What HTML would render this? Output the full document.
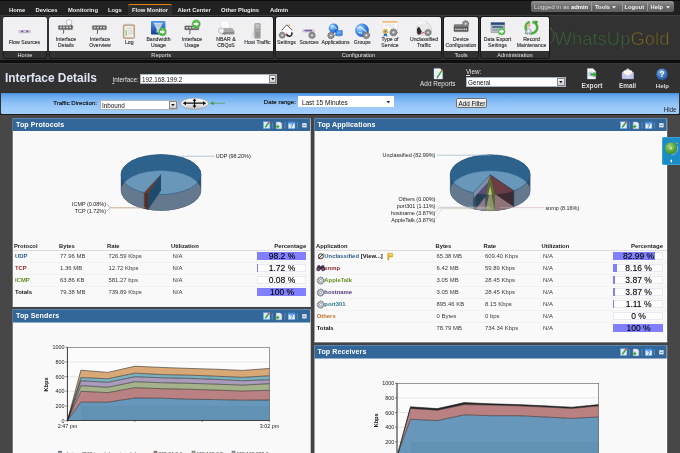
<!DOCTYPE html>
<html><head><meta charset="utf-8"><title>Interface Details</title>
<style>
html,body{margin:0;padding:0;}
body{width:680px;height:453px;overflow:hidden;background:#313131;position:relative;will-change:transform;font-family:"Liberation Sans",sans-serif;}
.t{position:absolute;white-space:nowrap;line-height:1.117em;}
.b{position:absolute;box-sizing:border-box;}
svg{position:absolute;overflow:visible;}
</style></head><body>
<div class="b" style="left:0px;top:0px;width:680px;height:15px;background:#212121;"></div>
<div class="b" style="left:0px;top:0px;width:680px;height:1px;background:#0c0c0c;"></div>
<div class="b" style="left:127.5px;top:4px;width:44.5px;height:11.5px;background:#2f2f2f;border-top:1px solid #e8820c;border-radius:2px 2px 0 0;"></div>
<span class="t" style="top:6.75px;font-size:5.8px;color:#ececec;font-weight:bold;left:9.00px;">Home</span>
<span class="t" style="top:6.75px;font-size:5.8px;color:#ececec;font-weight:bold;left:35.50px;">Devices</span>
<span class="t" style="top:6.75px;font-size:5.8px;color:#ececec;font-weight:bold;left:68.00px;">Monitoring</span>
<span class="t" style="top:6.75px;font-size:5.8px;color:#ececec;font-weight:bold;left:108.00px;">Logs</span>
<span class="t" style="top:6.75px;font-size:5.8px;color:#ececec;font-weight:bold;left:132.00px;">Flow Monitor</span>
<span class="t" style="top:6.75px;font-size:5.8px;color:#ececec;font-weight:bold;left:177.50px;">Alert Center</span>
<span class="t" style="top:6.75px;font-size:5.8px;color:#ececec;font-weight:bold;left:221.00px;">Other Plugins</span>
<span class="t" style="top:6.75px;font-size:5.8px;color:#ececec;font-weight:bold;left:270.00px;">Admin</span>
<div class="b" style="left:530.5px;top:1.3px;width:143.5px;height:11px;background:linear-gradient(#929292,#6c6c6c 50%,#5e5e5e);border-radius:2.5px;"></div>
<span class="t" style="top:3.69px;font-size:6.2px;color:#dcdcdc;left:534.00px;">Logged in as</span>
<span class="t" style="top:4.05px;font-size:5.8px;color:#fff;font-weight:bold;left:571.00px;">admin</span>
<div class="b" style="left:591px;top:2.2px;width:0.6px;height:9.2px;background:#9a9a9a;"></div>
<div class="b" style="left:621.5px;top:2.2px;width:0.6px;height:9.2px;background:#9a9a9a;"></div>
<div class="b" style="left:647px;top:2.2px;width:0.6px;height:9.2px;background:#9a9a9a;"></div>
<span class="t" style="top:4.05px;font-size:5.8px;color:#f2f2f2;font-weight:bold;left:595.00px;">Tools</span>
<span class="t" style="top:4.05px;font-size:5.8px;color:#f2f2f2;font-weight:bold;left:624.50px;">Logout</span>
<span class="t" style="top:4.05px;font-size:5.8px;color:#f2f2f2;font-weight:bold;left:650.50px;">Help</span>
<svg style="left:0;top:0" width="680" height="15"><path d="M612 6.3h4l-2 2.2zM666 6.3h4l-2 2.2z" fill="#f2f2f2"/></svg>
<div class="b" style="left:0px;top:15px;width:680px;height:45.4px;background:#323232;"></div>
<div class="b" style="left:1px;top:14.8px;width:679px;height:0.9px;background:#3d3d3d;"></div>
<div class="b" style="left:0px;top:60.3px;width:680px;height:2.6px;background:#0e0e0e;"></div>
<div class="b" style="left:0px;top:63px;width:680px;height:1.4px;background:#383838;"></div>
<div class="b" style="left:2.7px;top:16.4px;width:44.6px;height:43.1px;background:#313131;border:1px solid #191919;border-radius:2.5px;"></div>
<div class="b" style="left:3.3px;top:17.3px;width:43.4px;height:33.5px;background:#f0f0f2;border-radius:2px 2px 0 0;"></div>
<span class="t" style="top:52.23px;font-size:5.6px;color:#e6e6e6;left:25.00px;transform:translateX(-50%);">Home</span>
<div class="b" style="left:48.7px;top:16.4px;width:224.9px;height:43.1px;background:#313131;border:1px solid #191919;border-radius:2.5px;"></div>
<div class="b" style="left:49.3px;top:17.3px;width:223.70000000000002px;height:33.5px;background:#f0f0f2;border-radius:2px 2px 0 0;"></div>
<span class="t" style="top:52.23px;font-size:5.6px;color:#e6e6e6;left:161.15px;transform:translateX(-50%);">Reports</span>
<div class="b" style="left:275.3px;top:16.4px;width:166.29999999999998px;height:43.1px;background:#313131;border:1px solid #191919;border-radius:2.5px;"></div>
<div class="b" style="left:275.90000000000003px;top:17.3px;width:165.1px;height:33.5px;background:#f0f0f2;border-radius:2px 2px 0 0;"></div>
<span class="t" style="top:52.23px;font-size:5.6px;color:#e6e6e6;left:358.45px;transform:translateX(-50%);">Configuration</span>
<div class="b" style="left:443.4px;top:16.4px;width:35.200000000000024px;height:43.1px;background:#313131;border:1px solid #191919;border-radius:2.5px;"></div>
<div class="b" style="left:444.0px;top:17.3px;width:34.00000000000002px;height:33.5px;background:#f0f0f2;border-radius:2px 2px 0 0;"></div>
<span class="t" style="top:52.23px;font-size:5.6px;color:#e6e6e6;left:461.00px;transform:translateX(-50%);">Tools</span>
<div class="b" style="left:480.4px;top:16.4px;width:69.19999999999996px;height:43.1px;background:#313131;border:1px solid #191919;border-radius:2.5px;"></div>
<div class="b" style="left:481.0px;top:17.3px;width:67.99999999999997px;height:33.5px;background:#f0f0f2;border-radius:2px 2px 0 0;"></div>
<span class="t" style="top:52.23px;font-size:5.6px;color:#e6e6e6;left:515.00px;transform:translateX(-50%);">Administration</span>
<span class="t" style="top:40.28px;font-size:5.1px;color:#383838;left:24.50px;transform:translateX(-50%);-webkit-text-stroke:0.16px #383838;letter-spacing:0.05px;">Flow Sources</span>
<span class="t" style="top:37.38px;font-size:5.1px;color:#383838;left:66.00px;transform:translateX(-50%);-webkit-text-stroke:0.16px #383838;letter-spacing:0.05px;">Interface</span>
<span class="t" style="top:43.18px;font-size:5.1px;color:#383838;left:66.00px;transform:translateX(-50%);-webkit-text-stroke:0.16px #383838;letter-spacing:0.05px;">Details</span>
<span class="t" style="top:37.38px;font-size:5.1px;color:#383838;left:100.00px;transform:translateX(-50%);-webkit-text-stroke:0.16px #383838;letter-spacing:0.05px;">Interface</span>
<span class="t" style="top:43.18px;font-size:5.1px;color:#383838;left:100.00px;transform:translateX(-50%);-webkit-text-stroke:0.16px #383838;letter-spacing:0.05px;">Overview</span>
<span class="t" style="top:40.28px;font-size:5.1px;color:#383838;left:129.30px;transform:translateX(-50%);-webkit-text-stroke:0.16px #383838;letter-spacing:0.05px;">Log</span>
<span class="t" style="top:37.38px;font-size:5.1px;color:#383838;left:158.50px;transform:translateX(-50%);-webkit-text-stroke:0.16px #383838;letter-spacing:0.05px;">Bandwidth</span>
<span class="t" style="top:43.18px;font-size:5.1px;color:#383838;left:158.50px;transform:translateX(-50%);-webkit-text-stroke:0.16px #383838;letter-spacing:0.05px;">Usage</span>
<span class="t" style="top:37.38px;font-size:5.1px;color:#383838;left:192.00px;transform:translateX(-50%);-webkit-text-stroke:0.16px #383838;letter-spacing:0.05px;">Interface</span>
<span class="t" style="top:43.18px;font-size:5.1px;color:#383838;left:192.00px;transform:translateX(-50%);-webkit-text-stroke:0.16px #383838;letter-spacing:0.05px;">Usage</span>
<span class="t" style="top:37.38px;font-size:5.1px;color:#383838;left:226.00px;transform:translateX(-50%);-webkit-text-stroke:0.16px #383838;letter-spacing:0.05px;">NBAR &amp;</span>
<span class="t" style="top:43.18px;font-size:5.1px;color:#383838;left:226.00px;transform:translateX(-50%);-webkit-text-stroke:0.16px #383838;letter-spacing:0.05px;">CBQoS</span>
<span class="t" style="top:40.28px;font-size:5.1px;color:#383838;left:257.50px;transform:translateX(-50%);-webkit-text-stroke:0.16px #383838;letter-spacing:0.05px;">Host Traffic</span>
<span class="t" style="top:40.28px;font-size:5.1px;color:#383838;left:286.50px;transform:translateX(-50%);-webkit-text-stroke:0.16px #383838;letter-spacing:0.05px;">Settings</span>
<span class="t" style="top:40.28px;font-size:5.1px;color:#383838;left:309.00px;transform:translateX(-50%);-webkit-text-stroke:0.16px #383838;letter-spacing:0.05px;">Sources</span>
<span class="t" style="top:40.28px;font-size:5.1px;color:#383838;left:335.50px;transform:translateX(-50%);-webkit-text-stroke:0.16px #383838;letter-spacing:0.05px;">Applications</span>
<span class="t" style="top:40.28px;font-size:5.1px;color:#383838;left:362.20px;transform:translateX(-50%);-webkit-text-stroke:0.16px #383838;letter-spacing:0.05px;">Groups</span>
<span class="t" style="top:37.38px;font-size:5.1px;color:#383838;left:390.00px;transform:translateX(-50%);-webkit-text-stroke:0.16px #383838;letter-spacing:0.05px;">Type of</span>
<span class="t" style="top:43.18px;font-size:5.1px;color:#383838;left:390.00px;transform:translateX(-50%);-webkit-text-stroke:0.16px #383838;letter-spacing:0.05px;">Service</span>
<span class="t" style="top:37.38px;font-size:5.1px;color:#383838;left:424.00px;transform:translateX(-50%);-webkit-text-stroke:0.16px #383838;letter-spacing:0.05px;">Unclassified</span>
<span class="t" style="top:43.18px;font-size:5.1px;color:#383838;left:424.00px;transform:translateX(-50%);-webkit-text-stroke:0.16px #383838;letter-spacing:0.05px;">Traffic</span>
<span class="t" style="top:37.38px;font-size:5.1px;color:#383838;left:461.00px;transform:translateX(-50%);-webkit-text-stroke:0.16px #383838;letter-spacing:0.05px;">Device</span>
<span class="t" style="top:43.18px;font-size:5.1px;color:#383838;left:461.00px;transform:translateX(-50%);-webkit-text-stroke:0.16px #383838;letter-spacing:0.05px;">Configuration</span>
<span class="t" style="top:37.38px;font-size:5.1px;color:#383838;left:497.50px;transform:translateX(-50%);-webkit-text-stroke:0.16px #383838;letter-spacing:0.05px;">Data Export</span>
<span class="t" style="top:43.18px;font-size:5.1px;color:#383838;left:497.50px;transform:translateX(-50%);-webkit-text-stroke:0.16px #383838;letter-spacing:0.05px;">Settings</span>
<span class="t" style="top:37.38px;font-size:5.1px;color:#383838;left:531.50px;transform:translateX(-50%);-webkit-text-stroke:0.16px #383838;letter-spacing:0.05px;">Record</span>
<span class="t" style="top:43.18px;font-size:5.1px;color:#383838;left:531.50px;transform:translateX(-50%);-webkit-text-stroke:0.16px #383838;letter-spacing:0.05px;">Maintenance</span>
<span class="t" style="top:28.65px;font-size:18.4px;color:#3a693a;left:554.50px;letter-spacing:0.05px;-webkit-text-stroke:0.55px #323232;"><span style="color:#386538">WhatsUp</span><span style="color:#7a681e">Gold</span></span>
<svg style="left:0;top:0" width="680" height="62"><path d="M550 28.5a9 9 0 0 1 0 15" fill="none" stroke="#555" stroke-width="0.8"/><path d="M550 27l1 2.5" stroke="#7c691f" stroke-width="0.8"/></svg>
<span class="t" style="top:71.63px;font-size:11.9px;color:#dfe6f2;font-weight:bold;left:5.00px;">Interface Details</span>
<span class="t" style="top:76.30px;font-size:6.3px;color:#e0e0e0;left:112.50px;"><u>I</u>nterface:</span>
<div class="b" style="left:140px;top:74.3px;width:137px;height:9.8px;background:#fff;border:0.5px solid #a9b4c0;"></div>
<span class="t" style="top:76.00px;font-size:6.3px;color:#111;left:142.00px;">192.168.199.2</span>
<div class="b" style="left:268.6px;top:75.1px;width:7.6px;height:8.200000000000001px;background:linear-gradient(#f4f4f4,#cfcfcf);border:0.5px solid #888;"></div>
<svg style="left:268.6px;top:74.3px" width="8" height="9.8"><path d="M2.2 4.0h3.4l-1.7 2.2z" fill="#111"/></svg>
<span class="t" style="top:80.22px;font-size:6.39px;color:#e0e0e0;left:437.80px;transform:translateX(-50%);">Add Reports</span>
<span class="t" style="top:68.20px;font-size:6.3px;color:#e0e0e0;left:466.00px;"><u>V</u>iew:</span>
<div class="b" style="left:466px;top:77px;width:99.5px;height:9.8px;background:#fff;border:0.5px solid #a9b4c0;"></div>
<span class="t" style="top:78.70px;font-size:6.3px;color:#111;left:468.00px;">General</span>
<div class="b" style="left:557.1px;top:77.8px;width:7.6px;height:8.200000000000001px;background:linear-gradient(#f4f4f4,#cfcfcf);border:0.5px solid #888;"></div>
<svg style="left:557.1px;top:77px" width="8" height="9.8"><path d="M2.2 4.0h3.4l-1.7 2.2z" fill="#111"/></svg>
<span class="t" style="top:82.03px;font-size:6.6px;color:#dcdcdc;font-weight:bold;left:592.00px;transform:translateX(-50%);">Export</span>
<span class="t" style="top:82.25px;font-size:6.35px;color:#dcdcdc;font-weight:bold;left:627.50px;transform:translateX(-50%);">Email</span>
<span class="t" style="top:82.62px;font-size:6.05px;color:#dcdcdc;font-weight:bold;left:662.40px;transform:translateX(-50%);">Help</span>
<div class="b" style="left:1px;top:92.8px;width:677.7px;height:21px;background:linear-gradient(#4585d2 0%,#5c9de9 7%,#70b0f1 22%,#8ec1f6 48%,#9ccafa 72%,#a0cdfc 100%);border-radius:0 0 1.5px 1.5px;"></div>
<span class="t" style="top:99.92px;font-size:6.05px;color:#0c0c0c;left:53.20px;-webkit-text-stroke:0.15px #111;">Traffic Direction:</span>
<div class="b" style="left:100px;top:99.8px;width:77.5px;height:9.8px;background:#fff;border:0.5px solid #a9b4c0;"></div>
<span class="t" style="top:101.50px;font-size:6.3px;color:#111;left:102.00px;">Inbound</span>
<div class="b" style="left:169.1px;top:100.6px;width:7.6px;height:8.200000000000001px;background:linear-gradient(#f4f4f4,#cfcfcf);border:0.5px solid #888;"></div>
<svg style="left:169.1px;top:99.8px" width="8" height="9.8"><path d="M2.2 4.0h3.4l-1.7 2.2z" fill="#111"/></svg>
<span class="t" style="top:99.03px;font-size:6.15px;color:#0c0c0c;left:263.80px;-webkit-text-stroke:0.15px #111;">Date range:</span>
<div class="b" style="left:298px;top:96.4px;width:95.5px;height:10.3px;background:#fff;"></div>
<span class="t" style="top:99.02px;font-size:6.5px;color:#111;left:301.90px;">Last 15 Minutes</span>
<svg style="left:386px;top:96.5px" width="8" height="10"><path d="M0.5 4h3.6l-1.8 2.2z" fill="#10104a"/></svg>
<div class="b" style="left:456.2px;top:98.3px;width:31.2px;height:10.2px;background:linear-gradient(#f6f6f6,#dcdcdc);border:0.6px solid #6f6f6f;border-radius:1.5px;"></div>
<span class="t" style="top:100.20px;font-size:6.3px;color:#111;left:472.00px;transform:translateX(-50%);">Add Filter</span>
<span class="t" style="top:105.90px;font-size:6.3px;color:#222;right:3.40px;">Hide</span>
<svg style="left:0;top:0" width="680" height="120">
<defs><linearGradient id="eg" x1="0" y1="0" x2="0" y2="1"><stop offset="0" stop-color="#ffffff"/><stop offset="0.6" stop-color="#e6e6e6"/><stop offset="1" stop-color="#bcbcbc"/></linearGradient></defs>
<ellipse cx="194.5" cy="103.7" rx="14" ry="5.6" fill="url(#eg)" stroke="#8a8a8a" stroke-width="0.5"/>
<path d="M184.5 103.2h20M194.5 99.6v7.2" stroke="#111" stroke-width="1.2" fill="none"/>
<path d="M182.8 103.2l3.2-2v4zM206.2 103.2l-3.200-2v4zM194.5 98.500l-2 2.300h4zM194.5 107.900l-2-2.300h4z" fill="#111"/>
<path d="M211.5 103.2h13.5" stroke="#4a9a3a" stroke-width="0.7"/><path d="M209.8 103.2l3.6-1.7v3.4z" fill="#3f9a34"/>
</svg>
<div class="b" style="left:0px;top:114px;width:680px;height:339px;background:#474747;"></div>
<div class="b" style="left:0px;top:113.8px;width:680px;height:1.4px;background:#1a1a1a;"></div>
<div class="b" style="left:11.7px;top:117.6px;width:657px;height:340px;background:#434343;"></div>
<svg style="left:0;top:0" width="680" height="453"><rect x="12.7" y="118.5" width="298.0" height="188.2" fill="#f9f9f9"/><rect x="12.7" y="305.5" width="298.0" height="1.2" fill="#ffffff"/><rect x="12.7" y="118.5" width="297.5" height="12.5" fill="#336699"/><rect x="12.7" y="118.5" width="297.5" height="0.6" fill="#5a88b8"/></svg>
<span class="t" style="top:120.92px;font-size:7.05px;color:#fff;font-weight:bold;left:16.00px;letter-spacing:0.1px;">Top Protocols</span>
<svg style="left:261.2px;top:118.60px" width="50" height="13">
<g>
<rect x="2.4" y="2.7" width="6.5" height="6.8" fill="#dce9fb" stroke="#62a4f2" stroke-width="0.5"/>
<path d="M4.300 8.400l3.100-4.400" stroke="#3aa02a" stroke-width="1.500"/><path d="M7.400 4l0.900-1.300" stroke="#e03a20" stroke-width="1.500"/>
<path d="M11.3 3v6.6M24 3v6.6M36.3 3v6.6" stroke="#8fb0d0" stroke-width="0.5"/>
<path d="M15.2 2.9h4l1.6 1.600v5.200h-5.600z" fill="#e2e9f1" stroke="#b8c8d8" stroke-width="0.3"/>
<path d="M14.300 6.900h2v-1.300l2.300 2-2.300 2v-1.300h-2z" fill="#2aa52a"/>
<rect x="27.2" y="3" width="6.8" height="6.6" fill="#dfeeff" stroke="#5aa0e8" stroke-width="0.5"/>
<rect x="27.2" y="3" width="6.8" height="1.6" fill="#3b8ae6"/>
<text x="30.6" y="8.9" font-size="4.6" font-weight="bold" fill="#2a6ac0" text-anchor="middle" font-family="Liberation Sans">?</text>
<rect x="41.2" y="4.2" width="4.4" height="4.2" fill="#e4e9f0"/>
<path d="M42.1 6.4h2.6" stroke="#4a6a98" stroke-width="0.7"/>
</g></svg>
<svg style="left:0;top:0" width="680" height="453"><rect x="12.7" y="309.4" width="298.0" height="150.60000000000002" fill="#f9f9f9"/><rect x="12.7" y="458.8" width="298.0" height="1.2" fill="#ffffff"/><rect x="12.7" y="309.4" width="297.5" height="13.1" fill="#336699"/><rect x="12.7" y="309.4" width="297.5" height="0.6" fill="#5a88b8"/></svg>
<span class="t" style="top:312.12px;font-size:7.05px;color:#fff;font-weight:bold;left:16.00px;letter-spacing:0.1px;">Top Senders</span>
<svg style="left:261.2px;top:309.80px" width="50" height="13">
<g>
<rect x="2.4" y="2.7" width="6.5" height="6.8" fill="#dce9fb" stroke="#62a4f2" stroke-width="0.5"/>
<path d="M4.300 8.400l3.100-4.400" stroke="#3aa02a" stroke-width="1.500"/><path d="M7.400 4l0.900-1.300" stroke="#e03a20" stroke-width="1.500"/>
<path d="M11.3 3v6.6M24 3v6.6M36.3 3v6.6" stroke="#8fb0d0" stroke-width="0.5"/>
<path d="M15.2 2.9h4l1.6 1.600v5.200h-5.600z" fill="#e2e9f1" stroke="#b8c8d8" stroke-width="0.3"/>
<path d="M14.300 6.900h2v-1.300l2.300 2-2.300 2v-1.300h-2z" fill="#2aa52a"/>
<rect x="27.2" y="3" width="6.8" height="6.6" fill="#dfeeff" stroke="#5aa0e8" stroke-width="0.5"/>
<rect x="27.2" y="3" width="6.8" height="1.6" fill="#3b8ae6"/>
<text x="30.6" y="8.9" font-size="4.6" font-weight="bold" fill="#2a6ac0" text-anchor="middle" font-family="Liberation Sans">?</text>
<rect x="41.2" y="4.2" width="4.4" height="4.2" fill="#e4e9f0"/>
<path d="M42.1 6.4h2.6" stroke="#4a6a98" stroke-width="0.7"/>
</g></svg>
<svg style="left:0;top:0" width="680" height="453"><rect x="314.5" y="118.5" width="352.70000000000005" height="223.7" fill="#f9f9f9"/><rect x="314.5" y="341.0" width="352.70000000000005" height="1.2" fill="#ffffff"/><rect x="314.5" y="118.5" width="352.20000000000005" height="12.5" fill="#336699"/><rect x="314.5" y="118.5" width="352.20000000000005" height="0.6" fill="#5a88b8"/></svg>
<span class="t" style="top:120.92px;font-size:7.05px;color:#fff;font-weight:bold;left:317.50px;letter-spacing:0.1px;">Top Applications</span>
<svg style="left:617.7px;top:118.60px" width="50" height="13">
<g>
<rect x="2.4" y="2.7" width="6.5" height="6.8" fill="#dce9fb" stroke="#62a4f2" stroke-width="0.5"/>
<path d="M4.300 8.400l3.100-4.400" stroke="#3aa02a" stroke-width="1.500"/><path d="M7.400 4l0.900-1.300" stroke="#e03a20" stroke-width="1.500"/>
<path d="M11.3 3v6.6M24 3v6.6M36.3 3v6.6" stroke="#8fb0d0" stroke-width="0.5"/>
<path d="M15.2 2.9h4l1.6 1.600v5.200h-5.600z" fill="#e2e9f1" stroke="#b8c8d8" stroke-width="0.3"/>
<path d="M14.300 6.900h2v-1.300l2.300 2-2.300 2v-1.300h-2z" fill="#2aa52a"/>
<rect x="27.2" y="3" width="6.8" height="6.6" fill="#dfeeff" stroke="#5aa0e8" stroke-width="0.5"/>
<rect x="27.2" y="3" width="6.8" height="1.6" fill="#3b8ae6"/>
<text x="30.6" y="8.9" font-size="4.6" font-weight="bold" fill="#2a6ac0" text-anchor="middle" font-family="Liberation Sans">?</text>
<rect x="41.2" y="4.2" width="4.4" height="4.2" fill="#e4e9f0"/>
<path d="M42.1 6.4h2.6" stroke="#4a6a98" stroke-width="0.7"/>
</g></svg>
<svg style="left:0;top:0" width="680" height="453"><rect x="314.5" y="345.3" width="352.70000000000005" height="114.69999999999999" fill="#f9f9f9"/><rect x="314.5" y="458.8" width="352.70000000000005" height="1.2" fill="#ffffff"/><rect x="314.5" y="345.3" width="352.20000000000005" height="13.2" fill="#336699"/><rect x="314.5" y="345.3" width="352.20000000000005" height="0.6" fill="#5a88b8"/></svg>
<span class="t" style="top:348.07px;font-size:7.05px;color:#fff;font-weight:bold;left:317.50px;letter-spacing:0.1px;">Top Receivers</span>
<svg style="left:617.7px;top:345.75px" width="50" height="13">
<g>
<rect x="2.4" y="2.7" width="6.5" height="6.8" fill="#dce9fb" stroke="#62a4f2" stroke-width="0.5"/>
<path d="M4.300 8.400l3.100-4.400" stroke="#3aa02a" stroke-width="1.500"/><path d="M7.400 4l0.900-1.300" stroke="#e03a20" stroke-width="1.500"/>
<path d="M11.3 3v6.6M24 3v6.6M36.3 3v6.6" stroke="#8fb0d0" stroke-width="0.5"/>
<path d="M15.2 2.9h4l1.6 1.600v5.200h-5.600z" fill="#e2e9f1" stroke="#b8c8d8" stroke-width="0.3"/>
<path d="M14.300 6.900h2v-1.300l2.300 2-2.300 2v-1.300h-2z" fill="#2aa52a"/>
<rect x="27.2" y="3" width="6.8" height="6.6" fill="#dfeeff" stroke="#5aa0e8" stroke-width="0.5"/>
<rect x="27.2" y="3" width="6.8" height="1.6" fill="#3b8ae6"/>
<text x="30.6" y="8.9" font-size="4.6" font-weight="bold" fill="#2a6ac0" text-anchor="middle" font-family="Liberation Sans">?</text>
<rect x="41.2" y="4.2" width="4.4" height="4.2" fill="#e4e9f0"/>
<path d="M42.1 6.4h2.6" stroke="#4a6a98" stroke-width="0.7"/>
</g></svg>
<div class="b" style="left:662px;top:136.8px;width:18px;height:28px;background:#1b8cc4;border-radius:2px 0 0 2px;border:0.5px solid #3aa3d6;border-right:none;"></div>
<svg style="left:0;top:0" width="680" height="200">
<defs><radialGradient id="gg" cx="0.4" cy="0.35" r="0.7"><stop offset="0" stop-color="#a8d878"/><stop offset="0.6" stop-color="#5aa838"/><stop offset="1" stop-color="#3a8828"/></radialGradient></defs>
<circle cx="671" cy="148.3" r="6" fill="url(#gg)"/>
<circle cx="671" cy="148.3" r="1.3" fill="#d8e8c8" opacity="0.8"/>
<path d="M677.5 146a7 7 0 0 1-6 9" fill="none" stroke="#cfe8f5" stroke-width="0.5"/>
<circle cx="677" cy="143.3" r="0.9" fill="#f0a030"/>
<path d="M672 159.3v3.4l-2-1.7z" fill="#fff"/>
</svg>
<span class="t" style="top:243.05px;font-size:5.8px;color:#222;font-weight:bold;left:14.00px;">Protocol</span>
<span class="t" style="top:243.05px;font-size:5.8px;color:#222;font-weight:bold;left:59.00px;">Bytes</span>
<span class="t" style="top:243.05px;font-size:5.8px;color:#222;font-weight:bold;left:107.00px;">Rate</span>
<span class="t" style="top:243.05px;font-size:5.8px;color:#222;font-weight:bold;left:171.00px;">Utilization</span>
<span class="t" style="top:242.92px;font-size:5.95px;color:#222;font-weight:bold;right:373.80px;">Percentage</span>
<div class="b" style="left:13.2px;top:249.8px;width:297.2px;height:0.6px;background:#dcdcdc;"></div>
<span class="t" style="top:253.16px;font-size:5.9px;color:#2c5d8f;font-weight:bold;left:15.00px;">UDP</span>
<span class="t" style="top:253.42px;font-size:5.95px;color:#3a3a3a;left:60.00px;">77.96 MB</span>
<span class="t" style="top:253.42px;font-size:5.95px;color:#3a3a3a;left:108.50px;">726.59 Kbps</span>
<span class="t" style="top:253.42px;font-size:5.95px;color:#3a3a3a;left:172.50px;">N/A</span>
<div class="b" style="left:257px;top:251.8px;width:49.4px;height:8px;background:#fdfdfd;border:0.5px solid #e8e8f0;"></div>
<div class="b" style="left:257px;top:251.8px;width:48.510799999999996px;height:8px;background:#8080ff;"></div>
<span class="t" style="top:251.81px;font-size:8.5px;color:#000;left:282.00px;transform:translateX(-50%);-webkit-text-stroke:0.12px #000;">98.2 %</span>
<div class="b" style="left:13.2px;top:261.8px;width:297.2px;height:0.5px;background:#f2f2f2;"></div>
<span class="t" style="top:265.16px;font-size:5.9px;color:#8b2a2a;font-weight:bold;left:15.00px;">TCP</span>
<span class="t" style="top:265.42px;font-size:5.95px;color:#3a3a3a;left:60.00px;">1.36 MB</span>
<span class="t" style="top:265.42px;font-size:5.95px;color:#3a3a3a;left:108.50px;">12.72 Kbps</span>
<span class="t" style="top:265.42px;font-size:5.95px;color:#3a3a3a;left:172.50px;">N/A</span>
<div class="b" style="left:257px;top:263.8px;width:49.4px;height:8px;background:#fdfdfd;border:0.5px solid #e8e8f0;"></div>
<div class="b" style="left:257px;top:263.8px;width:0.8496799999999999px;height:8px;background:#8080ff;"></div>
<span class="t" style="top:263.81px;font-size:8.5px;color:#000;left:282.00px;transform:translateX(-50%);-webkit-text-stroke:0.12px #000;">1.72 %</span>
<div class="b" style="left:13.2px;top:273.8px;width:297.2px;height:0.5px;background:#f2f2f2;"></div>
<span class="t" style="top:277.16px;font-size:5.9px;color:#6b8e23;font-weight:bold;left:15.00px;">ICMP</span>
<span class="t" style="top:277.42px;font-size:5.95px;color:#3a3a3a;left:60.00px;">63.86 KB</span>
<span class="t" style="top:277.42px;font-size:5.95px;color:#3a3a3a;left:108.50px;">581.27 bps</span>
<span class="t" style="top:277.42px;font-size:5.95px;color:#3a3a3a;left:172.50px;">N/A</span>
<div class="b" style="left:257px;top:275.8px;width:49.4px;height:8px;background:#fdfdfd;border:0.5px solid #e8e8f0;"></div>
<div class="b" style="left:257px;top:275.8px;width:0.03952px;height:8px;background:#8080ff;"></div>
<span class="t" style="top:275.81px;font-size:8.5px;color:#000;left:282.00px;transform:translateX(-50%);-webkit-text-stroke:0.12px #000;">0.08 %</span>
<div class="b" style="left:13.2px;top:285.8px;width:297.2px;height:0.5px;background:#f2f2f2;"></div>
<span class="t" style="top:289.16px;font-size:5.9px;color:#111;font-weight:bold;left:15.00px;">Totals</span>
<span class="t" style="top:289.42px;font-size:5.95px;color:#3a3a3a;left:60.00px;">79.38 MB</span>
<span class="t" style="top:289.42px;font-size:5.95px;color:#3a3a3a;left:108.50px;">739.89 Kbps</span>
<span class="t" style="top:289.42px;font-size:5.95px;color:#3a3a3a;left:172.50px;">N/A</span>
<div class="b" style="left:257px;top:287.8px;width:49.4px;height:8px;background:#fdfdfd;border:0.5px solid #e8e8f0;"></div>
<div class="b" style="left:257px;top:287.8px;width:49.4px;height:8px;background:#8080ff;"></div>
<span class="t" style="top:287.81px;font-size:8.5px;color:#000;left:282.00px;transform:translateX(-50%);-webkit-text-stroke:0.12px #000;">100 %</span>
<span class="t" style="top:243.05px;font-size:5.8px;color:#222;font-weight:bold;left:316.00px;">Application</span>
<span class="t" style="top:243.05px;font-size:5.8px;color:#222;font-weight:bold;left:435.50px;">Bytes</span>
<span class="t" style="top:243.05px;font-size:5.8px;color:#222;font-weight:bold;left:483.50px;">Rate</span>
<span class="t" style="top:243.05px;font-size:5.8px;color:#222;font-weight:bold;left:541.50px;">Utilization</span>
<span class="t" style="top:242.92px;font-size:5.95px;color:#222;font-weight:bold;right:17.00px;">Percentage</span>
<div class="b" style="left:314.8px;top:249.8px;width:352.2px;height:0.6px;background:#dcdcdc;"></div>
<span class="t" style="top:252.96px;font-size:5.9px;color:#2c5d8f;font-weight:bold;left:324.30px;">Unclassified</span>
<span class="t" style="top:253.32px;font-size:5.95px;color:#3a3a3a;left:436.50px;">65.38 MB</span>
<span class="t" style="top:253.32px;font-size:5.95px;color:#3a3a3a;left:485.00px;">609.40 Kbps</span>
<span class="t" style="top:253.32px;font-size:5.95px;color:#3a3a3a;left:543.00px;">N/A</span>
<div class="b" style="left:613.4px;top:251.8px;width:49.8px;height:8px;background:#fdfdfd;border:0.5px solid #e8e8f0;"></div>
<div class="b" style="left:613.4px;top:251.8px;width:41.32901999999999px;height:8px;background:#8080ff;"></div>
<span class="t" style="top:251.81px;font-size:8.5px;color:#000;left:638.60px;transform:translateX(-50%);-webkit-text-stroke:0.12px #000;">82.99 %</span>
<div class="b" style="left:314.8px;top:261.8px;width:352.2px;height:0.5px;background:#f2f2f2;"></div>
<span class="t" style="top:264.96px;font-size:5.9px;color:#8b2a2a;font-weight:bold;left:324.30px;">snmp</span>
<span class="t" style="top:265.32px;font-size:5.95px;color:#3a3a3a;left:436.50px;">6.42 MB</span>
<span class="t" style="top:265.32px;font-size:5.95px;color:#3a3a3a;left:485.00px;">59.89 Kbps</span>
<span class="t" style="top:265.32px;font-size:5.95px;color:#3a3a3a;left:543.00px;">N/A</span>
<div class="b" style="left:613.4px;top:263.8px;width:49.8px;height:8px;background:#fdfdfd;border:0.5px solid #e8e8f0;"></div>
<div class="b" style="left:613.4px;top:263.8px;width:4.06368px;height:8px;background:#8080ff;"></div>
<span class="t" style="top:263.81px;font-size:8.5px;color:#000;left:638.60px;transform:translateX(-50%);-webkit-text-stroke:0.12px #000;">8.16 %</span>
<div class="b" style="left:314.8px;top:273.8px;width:352.2px;height:0.5px;background:#f2f2f2;"></div>
<span class="t" style="top:276.96px;font-size:5.9px;color:#6b8e23;font-weight:bold;left:324.30px;">AppleTalk</span>
<span class="t" style="top:277.32px;font-size:5.95px;color:#3a3a3a;left:436.50px;">3.05 MB</span>
<span class="t" style="top:277.32px;font-size:5.95px;color:#3a3a3a;left:485.00px;">28.45 Kbps</span>
<span class="t" style="top:277.32px;font-size:5.95px;color:#3a3a3a;left:543.00px;">N/A</span>
<div class="b" style="left:613.4px;top:275.8px;width:49.8px;height:8px;background:#fdfdfd;border:0.5px solid #e8e8f0;"></div>
<div class="b" style="left:613.4px;top:275.8px;width:1.92726px;height:8px;background:#8080ff;"></div>
<span class="t" style="top:275.81px;font-size:8.5px;color:#000;left:638.60px;transform:translateX(-50%);-webkit-text-stroke:0.12px #000;">3.87 %</span>
<div class="b" style="left:314.8px;top:285.8px;width:352.2px;height:0.5px;background:#f2f2f2;"></div>
<span class="t" style="top:288.96px;font-size:5.9px;color:#4b3a7a;font-weight:bold;left:324.30px;">hostname</span>
<span class="t" style="top:289.32px;font-size:5.95px;color:#3a3a3a;left:436.50px;">3.05 MB</span>
<span class="t" style="top:289.32px;font-size:5.95px;color:#3a3a3a;left:485.00px;">28.45 Kbps</span>
<span class="t" style="top:289.32px;font-size:5.95px;color:#3a3a3a;left:543.00px;">N/A</span>
<div class="b" style="left:613.4px;top:287.8px;width:49.8px;height:8px;background:#fdfdfd;border:0.5px solid #e8e8f0;"></div>
<div class="b" style="left:613.4px;top:287.8px;width:1.92726px;height:8px;background:#8080ff;"></div>
<span class="t" style="top:287.81px;font-size:8.5px;color:#000;left:638.60px;transform:translateX(-50%);-webkit-text-stroke:0.12px #000;">3.87 %</span>
<div class="b" style="left:314.8px;top:297.8px;width:352.2px;height:0.5px;background:#f2f2f2;"></div>
<span class="t" style="top:300.96px;font-size:5.9px;color:#2a7a8f;font-weight:bold;left:324.30px;">port301</span>
<span class="t" style="top:301.32px;font-size:5.95px;color:#3a3a3a;left:436.50px;">895.46 KB</span>
<span class="t" style="top:301.32px;font-size:5.95px;color:#3a3a3a;left:485.00px;">8.15 Kbps</span>
<span class="t" style="top:301.32px;font-size:5.95px;color:#3a3a3a;left:543.00px;">N/A</span>
<div class="b" style="left:613.4px;top:299.8px;width:49.8px;height:8px;background:#fdfdfd;border:0.5px solid #e8e8f0;"></div>
<div class="b" style="left:613.4px;top:299.8px;width:0.5527799999999999px;height:8px;background:#8080ff;"></div>
<span class="t" style="top:299.81px;font-size:8.5px;color:#000;left:638.60px;transform:translateX(-50%);-webkit-text-stroke:0.12px #000;">1.11 %</span>
<div class="b" style="left:314.8px;top:309.8px;width:352.2px;height:0.5px;background:#f2f2f2;"></div>
<span class="t" style="top:312.96px;font-size:5.9px;color:#b8732a;font-weight:bold;left:316.70px;">Others</span>
<span class="t" style="top:313.32px;font-size:5.95px;color:#3a3a3a;left:436.50px;">0 Bytes</span>
<span class="t" style="top:313.32px;font-size:5.95px;color:#3a3a3a;left:485.00px;">0 bps</span>
<span class="t" style="top:313.32px;font-size:5.95px;color:#3a3a3a;left:543.00px;">N/A</span>
<div class="b" style="left:613.4px;top:311.8px;width:49.8px;height:8px;background:#fdfdfd;border:0.5px solid #e8e8f0;"></div>
<span class="t" style="top:311.81px;font-size:8.5px;color:#000;left:638.60px;transform:translateX(-50%);-webkit-text-stroke:0.12px #000;">0 %</span>
<div class="b" style="left:314.8px;top:321.8px;width:352.2px;height:0.5px;background:#f2f2f2;"></div>
<span class="t" style="top:324.96px;font-size:5.9px;color:#111;font-weight:bold;left:316.70px;">Totals</span>
<span class="t" style="top:325.32px;font-size:5.95px;color:#3a3a3a;left:436.50px;">78.79 MB</span>
<span class="t" style="top:325.32px;font-size:5.95px;color:#3a3a3a;left:485.00px;">734.34 Kbps</span>
<span class="t" style="top:325.32px;font-size:5.95px;color:#3a3a3a;left:543.00px;">N/A</span>
<div class="b" style="left:613.4px;top:323.8px;width:49.8px;height:8px;background:#fdfdfd;border:0.5px solid #e8e8f0;"></div>
<div class="b" style="left:613.4px;top:323.8px;width:49.8px;height:8px;background:#8080ff;"></div>
<span class="t" style="top:323.81px;font-size:8.5px;color:#000;left:638.60px;transform:translateX(-50%);-webkit-text-stroke:0.12px #000;">100 %</span>
<span class="t" style="top:252.96px;font-size:5.9px;color:#111;font-weight:bold;left:360.80px;">[View...]</span>
<svg style="left:0;top:0" width="680" height="453"><circle cx="320.9" cy="256.3" r="2.5" fill="#f4ece4" stroke="#2a2a2a" stroke-width="0.9"/><path d="M318.3 258.9l5.300-5.400" stroke="#2a2a2a" stroke-width="0.9"/><path d="M387.700 253.300h4.900v3.800h-3.600v2.900h-1.300z" fill="#e0b020" stroke="#a88410" stroke-width="0.3"/><path d="M388.900 253.900h3.200v1.500h-3.200z" fill="#f8e070"/><g transform="translate(-0.5,-1.3)"><path d="M317 270.500l1.300-3.800h1.900l.600 1.200h1l.600-1.200h1.900l1.300 3.800c0 1-.900 1.700-1.900 1.700s-1.800-.700-1.900-1.700h-1c-.100 1-.900 1.700-1.900 1.700s-1.900-.700-1.900-1.700z" fill="#3a2a3c" stroke="#1c1420" stroke-width="0.300"/><circle cx="318.900" cy="270.500" r="1.100" fill="#8a5a9a"/><circle cx="323.700" cy="270.500" r="1.100" fill="#8a5a9a"/><path d="M318.300 267.300h1.400M322.900 267.300h1.400" stroke="#9a8aa8" stroke-width="0.500"/></g><circle cx="320.7" cy="280.6" r="3.5" fill="none" stroke="#5a6470" stroke-width="1" stroke-dasharray="1.3 0.9"/><circle cx="320.7" cy="280.6" r="2.9" fill="#eef1f4" stroke="#4c5662" stroke-width="0.7"/><circle cx="320.7" cy="280.6" r="1.250" fill="#fff" stroke="#5a6470" stroke-width="0.55"/><circle cx="320.7" cy="292.6" r="3.5" fill="none" stroke="#5a6470" stroke-width="1" stroke-dasharray="1.3 0.9"/><circle cx="320.7" cy="292.6" r="2.9" fill="#eef1f4" stroke="#4c5662" stroke-width="0.7"/><circle cx="320.7" cy="292.6" r="1.250" fill="#fff" stroke="#5a6470" stroke-width="0.55"/><circle cx="320.7" cy="304.6" r="3.5" fill="none" stroke="#5a6470" stroke-width="1" stroke-dasharray="1.3 0.9"/><circle cx="320.7" cy="304.6" r="2.9" fill="#eef1f4" stroke="#4c5662" stroke-width="0.7"/><circle cx="320.7" cy="304.6" r="1.250" fill="#fff" stroke="#5a6470" stroke-width="0.55"/></svg>
<svg style="left:0;top:0" width="680" height="453"><defs><clipPath id="cba"><ellipse cx="161" cy="190.5" rx="40.0" ry="20.0"/></clipPath><clipPath id="cta"><ellipse cx="161" cy="174.5" rx="40.0" ry="20.0"/></clipPath></defs><path d="M121.0 174.5V190.5A40.0 20.0 0 0 0 201.0 190.5V174.5A40.0 20.0 0 0 0 121.0 174.5z" fill="#2b4d6d"/><ellipse cx="161" cy="190.5" rx="40.0" ry="20.0" fill="#65798e"/><ellipse cx="161" cy="174.5" rx="40.0" ry="20.0" fill="#2c628c"/><ellipse cx="161" cy="174.5" rx="40.0" ry="20.0" fill="#6997ba" clip-path="url(#cba)"/><ellipse cx="161" cy="190.5" rx="40.0" ry="20.0" fill="none" stroke="#3d7099" stroke-width="0.5" clip-path="url(#cta)"/><ellipse cx="161" cy="174.5" rx="40.0" ry="20.0" fill="none" stroke="#24587f" stroke-width="0.5"/><path d="M121.0 174.5V190.5A40.0 20.0 0 0 0 201.0 190.5V174.5" fill="none" stroke="#54687c" stroke-width="0.4"/><polygon points="148.29,193.46 147.95,193.41 147.61,193.35 147.27,193.29 146.94,193.22 146.60,193.16 146.26,193.09 145.93,193.03 145.60,192.96 145.27,192.89 144.93,192.82 144.61,192.74 144.28,192.67 144.28,208.67 144.61,208.74 144.93,208.82 145.27,208.89 145.60,208.96 145.93,209.03 146.26,209.09 146.60,209.16 146.94,209.22 147.27,209.29 147.61,209.35 147.95,209.41 148.29,209.46" fill="#5a2d20"/><polygon points="144.28,192.67 144.26,192.66 144.25,192.66 144.23,192.66 144.22,192.65 144.20,192.65 144.19,192.65 144.17,192.64 144.16,192.64 144.14,192.64 144.13,192.63 144.11,192.63 144.10,192.63 144.10,208.63 144.11,208.63 144.13,208.63 144.14,208.64 144.16,208.64 144.17,208.64 144.19,208.65 144.20,208.65 144.22,208.65 144.23,208.66 144.25,208.66 144.26,208.66 144.28,208.67" fill="#5a2d20"/><polygon points="161.00,174.50 148.29,193.46 148.29,209.46 161.00,190.50" fill="#1f4a6b"/><polygon points="161.00,174.50 148.29,193.46 147.95,193.41 147.61,193.35 147.27,193.29 146.94,193.22 146.60,193.16 146.26,193.09 145.93,193.03 145.60,192.96 145.27,192.89 144.93,192.82 144.61,192.74 144.28,192.67" fill="#6b3a2a"/><polygon points="161.00,174.50 144.28,192.67 144.26,192.66 144.25,192.66 144.23,192.66 144.22,192.65 144.20,192.65 144.19,192.65 144.17,192.64 144.16,192.64 144.14,192.64 144.13,192.63 144.11,192.63 144.10,192.63" fill="#6b3a2a"/><path d="M161 174.5L148.29 193.46V209.46" fill="none" stroke="#1d3f5c" stroke-width="0.5"/><path d="M161 174.5L144.10 192.63V208.63" fill="none" stroke="#2a5a7f" stroke-width="0.5"/><path d="M178 156.2H214.5" stroke="#8aa8c0" stroke-width="0.6" fill="none"/><path d="M106.8 203.8L110.3 207.8H146M106.8 211.2L110.3 207.8" stroke="#a87858" stroke-width="0.6" fill="none"/><text x="215.8" y="158.2" font-family="Liberation Sans" font-size="5.45" fill="#222" text-anchor="start">UDP (98.20%)</text><text x="106" y="205.8" font-family="Liberation Sans" font-size="5.45" fill="#222" text-anchor="end">ICMP (0.08%)</text><text x="106" y="212.9" font-family="Liberation Sans" font-size="5.45" fill="#222" text-anchor="end">TCP (1.72%)</text></svg>
<svg style="left:0;top:0" width="680" height="453"><defs><clipPath id="cbb"><ellipse cx="490.2" cy="190.7" rx="40.0" ry="20.0"/></clipPath><clipPath id="ctb"><ellipse cx="490.2" cy="174.7" rx="40.0" ry="20.0"/></clipPath></defs><path d="M450.2 174.7V190.7A40.0 20.0 0 0 0 530.2 190.7V174.7A40.0 20.0 0 0 0 450.2 174.7z" fill="#2b4d6d"/><ellipse cx="490.2" cy="190.7" rx="40.0" ry="20.0" fill="#65798e"/><ellipse cx="490.2" cy="174.7" rx="40.0" ry="20.0" fill="#2c628c"/><ellipse cx="490.2" cy="174.7" rx="40.0" ry="20.0" fill="#6997ba" clip-path="url(#cbb)"/><ellipse cx="490.2" cy="190.7" rx="40.0" ry="20.0" fill="none" stroke="#3d7099" stroke-width="0.5" clip-path="url(#ctb)"/><ellipse cx="490.2" cy="174.7" rx="40.0" ry="20.0" fill="none" stroke="#24587f" stroke-width="0.5"/><path d="M450.2 174.7V190.7A40.0 20.0 0 0 0 530.2 190.7V174.7" fill="none" stroke="#54687c" stroke-width="0.4"/><polygon points="513.84,190.83 512.44,191.32 511.00,191.78 509.53,192.21 508.01,192.61 506.47,192.97 504.89,193.30 503.29,193.60 501.66,193.86 500.02,194.09 498.35,194.28 496.67,194.44 494.98,194.56 494.98,210.56 496.67,210.44 498.35,210.28 500.02,210.09 501.66,209.86 503.29,209.60 504.89,209.30 506.47,208.97 508.01,208.61 509.53,208.21 511.00,207.78 512.44,207.32 513.84,206.83" fill="#8e7478"/><polygon points="494.98,194.56 494.17,194.60 493.36,194.64 492.56,194.67 491.75,194.69 490.94,194.70 490.13,194.70 489.32,194.70 488.51,194.68 487.70,194.66 486.89,194.63 486.08,194.59 485.28,194.55 485.28,210.55 486.08,210.59 486.89,210.63 487.70,210.66 488.51,210.68 489.32,210.70 490.13,210.70 490.94,210.70 491.75,210.69 492.56,210.67 493.36,210.64 494.17,210.60 494.98,210.56" fill="#8b9569"/><polygon points="485.28,194.55 484.47,194.49 483.67,194.43 482.87,194.36 482.08,194.28 481.29,194.20 480.50,194.10 479.71,194.00 478.93,193.89 478.16,193.77 477.39,193.65 476.62,193.51 475.86,193.37 475.86,209.37 476.62,209.51 477.39,209.65 478.16,209.77 478.93,209.89 479.71,210.00 480.50,210.10 481.29,210.20 482.08,210.28 482.87,210.36 483.67,210.43 484.47,210.49 485.28,210.55" fill="#8a7b90"/><polygon points="475.86,193.37 475.65,193.33 475.43,193.29 475.21,193.24 475.00,193.20 474.78,193.15 474.57,193.11 474.36,193.06 474.14,193.02 473.93,192.97 473.72,192.92 473.51,192.87 473.30,192.83 473.30,208.83 473.51,208.87 473.72,208.92 473.93,208.97 474.14,209.02 474.36,209.06 474.57,209.11 474.78,209.15 475.00,209.20 475.21,209.24 475.43,209.29 475.65,209.33 475.86,209.37" fill="#20384a"/><polygon points="473.30,192.83 473.30,192.83 473.30,192.83 473.30,192.83 473.30,192.83 473.30,192.83 473.30,192.83 473.30,192.83 473.30,192.83 473.30,192.83 473.30,192.83 473.30,192.83 473.30,192.83 473.30,208.83 473.30,208.83 473.30,208.83 473.30,208.83 473.30,208.83 473.30,208.83 473.30,208.83 473.30,208.83 473.30,208.83 473.30,208.83 473.30,208.83 473.30,208.83 473.30,208.83" fill="#b8732a"/><polygon points="490.20,174.70 513.84,190.83 513.84,206.83 490.20,190.70" fill="#3c2a33"/><polygon points="490.20,174.70 473.30,192.83 473.30,208.83 490.20,190.70" fill="#7f93aa"/><polygon points="490.20,174.70 494.98,194.56 494.98,210.56 490.20,190.70" fill="#4a5528" opacity="0.75"/><polygon points="490.20,174.70 485.28,194.55 485.28,210.55 490.20,190.70" fill="#3a3050" opacity="0.75"/><polygon points="490.20,174.70 475.86,193.37 475.86,209.37 490.20,190.70" fill="#1f3a4a" opacity="0.75"/><polygon points="490.20,174.70 473.30,192.83 473.30,208.83 490.20,190.70" fill="#1f3a4a" opacity="0.75"/><polygon points="490.20,174.70 513.84,190.83 512.44,191.32 511.00,191.78 509.53,192.21 508.01,192.61 506.47,192.97 504.89,193.30 503.29,193.60 501.66,193.86 500.02,194.09 498.35,194.28 496.67,194.44 494.98,194.56" fill="#6c3c45"/><polygon points="490.20,174.70 494.98,194.56 494.17,194.60 493.36,194.64 492.56,194.67 491.75,194.69 490.94,194.70 490.13,194.70 489.32,194.70 488.51,194.68 487.70,194.66 486.89,194.63 486.08,194.59 485.28,194.55" fill="#5d6b32"/><polygon points="490.16,185.70 492.07,194.68 488.18,194.67" fill="#b9c286"/><polygon points="490.20,174.70 485.28,194.55 484.47,194.49 483.67,194.43 482.87,194.36 482.08,194.28 481.29,194.20 480.50,194.10 479.71,194.00 478.93,193.89 478.16,193.77 477.39,193.65 476.62,193.51 475.86,193.37" fill="#5b4c7c"/><polygon points="490.20,174.70 475.86,193.37 475.65,193.33 475.43,193.29 475.21,193.24 475.00,193.20 474.78,193.15 474.57,193.11 474.36,193.06 474.14,193.02 473.93,192.97 473.72,192.92 473.51,192.87 473.30,192.83" fill="#3a7a9a"/><polygon points="490.20,174.70 473.30,192.83 473.30,192.83 473.30,192.83 473.30,192.83 473.30,192.83 473.30,192.83 473.30,192.83 473.30,192.83 473.30,192.83 473.30,192.83 473.30,192.83 473.30,192.83 473.30,192.83" fill="#b8732a"/><polygon points="490.2,174.7 473.30,192.83 473.30,198.33 488.00,182.20" fill="#8799b0" opacity="0.85"/><path d="M490.2 174.7L513.84 190.83V206.83" fill="none" stroke="#1d3f5c" stroke-width="0.5"/><path d="M490.2 174.7L473.30 192.83V208.83" fill="none" stroke="#2a5a7f" stroke-width="0.5"/><path d="M437 155.2H491" stroke="#8aa8c0" stroke-width="0.6" fill="none"/><path d="M500 207.6H544.5" stroke="#c8a8a8" stroke-width="0.5" fill="none"/><path d="M435.5 198.6L438.5 204.4L441.5 207.2H490" stroke="#e0d0b8" stroke-width="0.5" fill="none"/><path d="M435.5 205.6L438.5 207.4H474" stroke="#a8c4cc" stroke-width="0.5" fill="none"/><path d="M435.5 212.6L438.5 208.2H482" stroke="#b8b0c8" stroke-width="0.5" fill="none"/><path d="M435.5 219.2L438.5 213.6L441.5 208.8H492" stroke="#c8d0a8" stroke-width="0.5" fill="none"/><text x="435.4" y="157.2" font-family="Liberation Sans" font-size="5.45" fill="#222" text-anchor="end">Unclassified (82.99%)</text><text x="545.4" y="210.2" font-family="Liberation Sans" font-size="5.45" fill="#222" text-anchor="start">snmp (8.16%)</text><text x="435.4" y="200.6" font-family="Liberation Sans" font-size="5.45" fill="#222" text-anchor="end">Others (0.00%)</text><text x="435.4" y="207.6" font-family="Liberation Sans" font-size="5.45" fill="#222" text-anchor="end">port301 (1.11%)</text><text x="435.4" y="214.8" font-family="Liberation Sans" font-size="5.45" fill="#222" text-anchor="end">hostname (3.87%)</text><text x="435.4" y="221.7" font-family="Liberation Sans" font-size="5.45" fill="#222" text-anchor="end">AppleTalk (3.87%)</text></svg>
<svg style="left:0;top:0" width="680" height="453"><rect x="67.4" y="347.4" width="202.20000000000002" height="73.10000000000002" fill="#fbfbfb"/><path d="M67.4 362.02H269.6" stroke="#d4d4d4" stroke-width="0.5"/><path d="M67.4 376.64H269.6" stroke="#d4d4d4" stroke-width="0.5"/><path d="M67.4 391.26H269.6" stroke="#d4d4d4" stroke-width="0.5"/><path d="M67.4 405.88H269.6" stroke="#d4d4d4" stroke-width="0.5"/><polygon points="67.40,420.50 80.88,402.19 107.84,402.19 134.80,398.02 161.76,398.22 188.72,399.21 215.68,399.61 242.64,400.20 269.60,400.00 269.60,420.50 242.64,420.50 215.68,420.50 188.72,420.50 161.76,420.50 134.80,420.50 107.84,420.50 80.88,420.50 67.40,420.50" fill="#6798bb"/><polygon points="67.40,420.50 80.88,391.26 107.84,392.65 134.80,387.69 161.76,388.68 188.72,389.27 215.68,390.07 242.64,391.06 269.60,390.27 269.60,400.00 242.64,400.20 215.68,399.61 188.72,399.21 161.76,398.22 134.80,398.02 107.84,402.19 80.88,402.19 67.40,420.50" fill="#b98182"/><polygon points="67.40,420.50 80.88,385.70 107.84,387.29 134.80,381.72 161.76,382.72 188.72,383.31 215.68,384.11 242.64,385.10 269.60,383.71 269.60,390.27 242.64,391.06 215.68,390.07 188.72,389.27 161.76,388.68 134.80,387.69 107.84,392.65 80.88,391.26 67.40,420.50" fill="#a4b18b"/><polygon points="67.40,420.50 80.88,380.73 107.84,382.32 134.80,376.76 161.76,377.75 188.72,378.35 215.68,379.34 242.64,380.73 269.60,379.74 269.60,383.71 242.64,385.10 215.68,384.11 188.72,383.31 161.76,382.72 134.80,381.72 107.84,387.29 80.88,385.70 67.40,420.50" fill="#a99bb9"/><polygon points="67.40,420.50 80.88,377.55 107.84,378.74 134.80,373.18 161.76,374.57 188.72,375.17 215.68,376.16 242.64,377.35 269.60,375.76 269.60,379.74 242.64,380.73 215.68,379.34 188.72,378.35 161.76,377.75 134.80,376.76 107.84,382.32 80.88,380.73 67.40,420.50" fill="#7bb1be"/><polygon points="67.40,420.50 80.88,370.20 107.84,372.39 134.80,366.23 161.76,367.42 188.72,368.41 215.68,369.21 242.64,370.40 269.60,368.41 269.60,375.76 242.64,377.35 215.68,376.16 188.72,375.17 161.76,374.57 134.80,373.18 107.84,378.74 80.88,377.55 67.40,420.50" fill="#d9a877"/><polyline points="67.40,420.50 80.88,402.19 107.84,402.19 134.80,398.02 161.76,398.22 188.72,399.21 215.68,399.61 242.64,400.20 269.60,400.00" fill="none" stroke="#1c1c1c" stroke-width="0.55"/><polyline points="67.40,420.50 80.88,391.26 107.84,392.65 134.80,387.69 161.76,388.68 188.72,389.27 215.68,390.07 242.64,391.06 269.60,390.27" fill="none" stroke="#1c1c1c" stroke-width="0.55"/><polyline points="67.40,420.50 80.88,385.70 107.84,387.29 134.80,381.72 161.76,382.72 188.72,383.31 215.68,384.11 242.64,385.10 269.60,383.71" fill="none" stroke="#1c1c1c" stroke-width="0.55"/><polyline points="67.40,420.50 80.88,380.73 107.84,382.32 134.80,376.76 161.76,377.75 188.72,378.35 215.68,379.34 242.64,380.73 269.60,379.74" fill="none" stroke="#1c1c1c" stroke-width="0.55"/><polyline points="67.40,420.50 80.88,377.55 107.84,378.74 134.80,373.18 161.76,374.57 188.72,375.17 215.68,376.16 242.64,377.35 269.60,375.76" fill="none" stroke="#1c1c1c" stroke-width="0.55"/><polyline points="67.40,420.50 80.88,370.20 107.84,372.39 134.80,366.23 161.76,367.42 188.72,368.41 215.68,369.21 242.64,370.40 269.60,368.41" fill="none" stroke="#1c1c1c" stroke-width="0.55"/><rect x="80.88" y="405.88" width="188.72" height="14.62" fill="#204060" opacity="0.07"/><rect x="67.4" y="347.4" width="202.20000000000002" height="73.10000000000002" fill="none" stroke="#555" stroke-width="0.6"/><path d="M67.4 347.4V420.5H269.6" fill="none" stroke="#222" stroke-width="0.7"/><path d="M65.4 347.40H67.4" stroke="#222" stroke-width="0.5"/><text x="64.60000000000001" y="349.40" font-family="Liberation Sans" font-size="5.4" fill="#222" text-anchor="end">1000</text><path d="M65.4 362.02H67.4" stroke="#222" stroke-width="0.5"/><text x="64.60000000000001" y="364.02" font-family="Liberation Sans" font-size="5.4" fill="#222" text-anchor="end">800</text><path d="M65.4 376.64H67.4" stroke="#222" stroke-width="0.5"/><text x="64.60000000000001" y="378.64" font-family="Liberation Sans" font-size="5.4" fill="#222" text-anchor="end">600</text><path d="M65.4 391.26H67.4" stroke="#222" stroke-width="0.5"/><text x="64.60000000000001" y="393.26" font-family="Liberation Sans" font-size="5.4" fill="#222" text-anchor="end">400</text><path d="M65.4 405.88H67.4" stroke="#222" stroke-width="0.5"/><text x="64.60000000000001" y="407.88" font-family="Liberation Sans" font-size="5.4" fill="#222" text-anchor="end">200</text><path d="M65.4 420.50H67.4" stroke="#222" stroke-width="0.5"/><text x="64.60000000000001" y="422.50" font-family="Liberation Sans" font-size="5.4" fill="#222" text-anchor="end">0</text><path d="M67.40 420.5v1.6" stroke="#222" stroke-width="0.5"/><path d="M134.80 420.5v1.6" stroke="#222" stroke-width="0.5"/><path d="M202.20 420.5v1.6" stroke="#222" stroke-width="0.5"/><path d="M269.60 420.5v1.6" stroke="#222" stroke-width="0.5"/><text transform="translate(48.10000000000001,384.45) rotate(-90)" font-family="Liberation Sans" font-size="5.6" font-weight="bold" fill="#111" text-anchor="middle">Kbps</text><text x="67.4" y="428.1" font-family="Liberation Sans" font-size="5.4" fill="#222" text-anchor="middle">2:47 pm</text><text x="269.6" y="428.1" font-family="Liberation Sans" font-size="5.4" fill="#222" text-anchor="middle">3:02 pm</text></svg>
<svg style="left:0;top:0" width="680" height="453">
<rect x="58.5" y="451.1" width="3" height="3" fill="#6798bb" stroke="#333" stroke-width="0.4"/>
<rect x="154" y="451.1" width="3" height="3" fill="#b98182" stroke="#333" stroke-width="0.4"/>
<rect x="192" y="451.1" width="3" height="3" fill="#a4b18b" stroke="#333" stroke-width="0.4"/>
<rect x="232" y="451.1" width="3" height="3" fill="#a99bb9" stroke="#333" stroke-width="0.4"/>
<text x="63" y="455.9" font-family="Liberation Sans" font-size="5" fill="#333">ml-cisco4506.ipswitch_m.ipswitch.com</text>
<text x="158.5" y="455.9" font-family="Liberation Sans" font-size="5" fill="#333">209.34.3.4</text>
<text x="196.5" y="455.9" font-family="Liberation Sans" font-size="5" fill="#333">192.168.3.5</text>
<text x="236.5" y="455.9" font-family="Liberation Sans" font-size="5" fill="#333">192.168.202.3</text>
</svg>
<svg style="left:0;top:0" width="680" height="453"><rect x="397" y="383.3" width="201.70000000000005" height="73.09999999999997" fill="#fbfbfb"/><path d="M397 397.92H598.7" stroke="#d4d4d4" stroke-width="0.5"/><path d="M397 412.54H598.7" stroke="#d4d4d4" stroke-width="0.5"/><path d="M397 427.16H598.7" stroke="#d4d4d4" stroke-width="0.5"/><path d="M397 441.78H598.7" stroke="#d4d4d4" stroke-width="0.5"/><polygon points="397.00,456.40 410.45,419.30 437.34,420.60 464.23,414.90 491.13,415.70 518.02,415.70 544.91,417.00 571.81,418.40 598.70,417.00 598.70,456.40 571.81,456.40 544.91,456.40 518.02,456.40 491.13,456.40 464.23,456.40 437.34,456.40 410.45,456.40 397.00,456.40" fill="#6798bb"/><polygon points="397.00,456.40 410.45,408.40 437.34,410.20 464.23,404.60 491.13,405.00 518.02,405.80 544.91,407.00 571.81,408.40 598.70,405.80 598.70,417.00 571.81,418.40 544.91,417.00 518.02,415.70 491.13,415.70 464.23,414.90 437.34,420.60 410.45,419.30 397.00,456.40" fill="#b98182"/><polygon points="397.00,456.40 410.45,406.80 437.34,408.60 464.23,402.60 491.13,403.80 518.02,404.60 544.91,405.80 571.81,407.20 598.70,404.60 598.70,405.80 571.81,408.40 544.91,407.00 518.02,405.80 491.13,405.00 464.23,404.60 437.34,410.20 410.45,408.40 397.00,456.40" fill="#2a2622"/><polyline points="397.00,456.40 410.45,419.30 437.34,420.60 464.23,414.90 491.13,415.70 518.02,415.70 544.91,417.00 571.81,418.40 598.70,417.00" fill="none" stroke="#1c1c1c" stroke-width="0.55"/><polyline points="397.00,456.40 410.45,408.40 437.34,410.20 464.23,404.60 491.13,405.00 518.02,405.80 544.91,407.00 571.81,408.40 598.70,405.80" fill="none" stroke="#1c1c1c" stroke-width="0.55"/><polyline points="397.00,456.40 410.45,406.80 437.34,408.60 464.23,402.60 491.13,403.80 518.02,404.60 544.91,405.80 571.81,407.20 598.70,404.60" fill="none" stroke="#1c1c1c" stroke-width="0.55"/><rect x="410.45" y="441.78" width="188.25" height="14.62" fill="#204060" opacity="0.07"/><rect x="397" y="383.3" width="201.70000000000005" height="73.09999999999997" fill="none" stroke="#555" stroke-width="0.6"/><path d="M397 383.3V456.4H598.7" fill="none" stroke="#222" stroke-width="0.7"/><path d="M395 383.30H397" stroke="#222" stroke-width="0.5"/><text x="394.2" y="385.30" font-family="Liberation Sans" font-size="5.4" fill="#222" text-anchor="end">1000</text><path d="M395 397.92H397" stroke="#222" stroke-width="0.5"/><text x="394.2" y="399.92" font-family="Liberation Sans" font-size="5.4" fill="#222" text-anchor="end">800</text><path d="M395 412.54H397" stroke="#222" stroke-width="0.5"/><text x="394.2" y="414.54" font-family="Liberation Sans" font-size="5.4" fill="#222" text-anchor="end">600</text><path d="M395 427.16H397" stroke="#222" stroke-width="0.5"/><text x="394.2" y="429.16" font-family="Liberation Sans" font-size="5.4" fill="#222" text-anchor="end">400</text><path d="M395 441.78H397" stroke="#222" stroke-width="0.5"/><text x="394.2" y="443.78" font-family="Liberation Sans" font-size="5.4" fill="#222" text-anchor="end">200</text><path d="M395 456.40H397" stroke="#222" stroke-width="0.5"/><text x="394.2" y="458.40" font-family="Liberation Sans" font-size="5.4" fill="#222" text-anchor="end">0</text><path d="M397.00 456.4v1.6" stroke="#222" stroke-width="0.5"/><path d="M464.23 456.4v1.6" stroke="#222" stroke-width="0.5"/><path d="M531.47 456.4v1.6" stroke="#222" stroke-width="0.5"/><path d="M598.70 456.4v1.6" stroke="#222" stroke-width="0.5"/><text transform="translate(377.7,420.35) rotate(-90)" font-family="Liberation Sans" font-size="5.6" font-weight="bold" fill="#111" text-anchor="middle">Kbps</text><text x="397" y="464.0" font-family="Liberation Sans" font-size="5.4" fill="#222" text-anchor="middle">2:47 pm</text><text x="598.7" y="464.0" font-family="Liberation Sans" font-size="5.4" fill="#222" text-anchor="middle">3:02 pm</text></svg>
<svg style="left:0;top:0" width="680" height="62"><defs><linearGradient id="bl" x1="0" y1="0" x2="0" y2="1"><stop offset="0" stop-color="#4a9af0"/><stop offset="1" stop-color="#173f8a"/></linearGradient><radialGradient id="gl" cx="0.35" cy="0.35" r="0.8"><stop offset="0" stop-color="#bfe0ff"/><stop offset="0.5" stop-color="#3a8ae6"/><stop offset="1" stop-color="#1a4aa8"/></radialGradient></defs><rect x="18.5" y="30" width="12.5" height="3.3" rx="0.8" fill="#c9c9d2"/><rect x="21" y="30.6" width="7.5" height="1.6" fill="#7d5ca6"/><rect x="23.4" y="30.8" width="2.6" height="1.2" fill="#e8e0f0"/><rect x="58.3" y="25.5" width="14.4" height="4.2" rx="0.8" fill="#626262" stroke="#a0a0a0" stroke-width="0.4"/><rect x="59.9" y="26.7" width="1.9" height="1.5" fill="#d8d8d8"/><rect x="63.0" y="26.7" width="1.9" height="1.5" fill="#d8d8d8"/><rect x="66.1" y="26.7" width="1.9" height="1.5" fill="#d8d8d8"/><rect x="69.2" y="26.7" width="1.9" height="1.5" fill="#d8d8d8"/><path d="M63.599999999999994 29.7v3.4l-1 .6" stroke="#444" stroke-width="0.8" fill="none"/><circle cx="69" cy="22.4" r="2.9" fill="#fafafa" stroke="#9a9a9a" stroke-width="0.6"/><path d="M70.9 24.7l2 2.4" stroke="#555" stroke-width="1"/><rect x="92.2" y="25.6" width="14.4" height="4.2" rx="0.8" fill="#626262" stroke="#a0a0a0" stroke-width="0.4"/><rect x="93.8" y="26.8" width="1.9" height="1.5" fill="#d8d8d8"/><rect x="96.9" y="26.8" width="1.9" height="1.5" fill="#d8d8d8"/><rect x="100.0" y="26.8" width="1.9" height="1.5" fill="#d8d8d8"/><rect x="103.1" y="26.8" width="1.9" height="1.5" fill="#d8d8d8"/><path d="M97.5 29.8v3.4l-1 .6" stroke="#444" stroke-width="0.8" fill="none"/><rect x="123.2" y="24.8" width="11.4" height="13.6" rx="0.8" fill="#c9a27a" stroke="#a07a55" stroke-width="0.4"/><rect x="124.4" y="26" width="9" height="11.3" fill="#eeeeee"/><rect x="126.6" y="23.8" width="4.6" height="2" rx="0.6" fill="#bdbdbd"/><path d="M126.7 28.3h5M128.2 30.8h4.4M128.2 33.2h4.4" stroke="#c4c4c4" stroke-width="0.8"/><path d="M126.2 30.2v5.6" stroke="#6cc04a" stroke-width="1"/><path d="M131.5 37.3l1.900-1.900v1.900z" fill="#fff"/><rect x="151" y="21" width="14.4" height="13.6" rx="0.8" fill="url(#bl)"/><path d="M153.4 22.8h9.6l-3.200 6.200v3.600h-3.200v-3.600z" fill="#d9e2ee" opacity="0.9"/><path d="M154.400 24.600h7.600M155.400 26.400h5.600" stroke="#9aa8bb" stroke-width="0.5"/><circle cx="162.4" cy="31.9" r="4" fill="#3fae3a" stroke="#8fd480" stroke-width="0.5"/><circle cx="161.9" cy="31.099999999999998" r="3.0" fill="#5cc455" opacity="0.6"/><path d="M160.0 31.0h2.2v-1.5l2.9 2.4-2.9 2.4v-1.5h-2.2z" fill="#fff"/><rect x="184.6" y="25.8" width="14.4" height="4.2" rx="0.8" fill="#626262" stroke="#a0a0a0" stroke-width="0.4"/><rect x="186.2" y="27.0" width="1.9" height="1.5" fill="#d8d8d8"/><rect x="189.3" y="27.0" width="1.9" height="1.5" fill="#d8d8d8"/><rect x="192.4" y="27.0" width="1.9" height="1.5" fill="#d8d8d8"/><rect x="195.5" y="27.0" width="1.9" height="1.5" fill="#d8d8d8"/><path d="M189.9 30.0v3.4l-1 .6" stroke="#444" stroke-width="0.8" fill="none"/><circle cx="196.2" cy="24" r="4.2" fill="#3fae3a" stroke="#8fd480" stroke-width="0.5"/><circle cx="195.7" cy="23.2" r="3.1500000000000004" fill="#5cc455" opacity="0.6"/><path d="M193.79999999999998 23.1h2.2v-1.5l2.9 2.4-2.9 2.4v-1.5h-2.2z" fill="#fff"/><path d="M221 20.600h6l2.400 2.400v7.600h-8.400z" fill="#fbfbfb" stroke="#d4d4d4" stroke-width="0.4"/><path d="M224 28.400h8.200l2 3.200v2.600h-12.200v-2.600z" fill="#a9a9a9" stroke="#7d7d7d" stroke-width="0.4"/><rect x="222.500" y="32" width="11.200" height="1.800" fill="#8a8a8a"/><circle cx="221.400" cy="30.800" r="2.800" fill="#f4f4f4" stroke="#9c9c9c" stroke-width="0.700"/><path d="M223.300 33l1.600 1.900" stroke="#777" stroke-width="0.9"/><path d="M251.5 38.400l3.200-2.400v-8l-3.200 6z" fill="#dcdcdc" opacity="0.7"/><rect x="254.700" y="23.500" width="5.600" height="14.800" rx="0.500" fill="#a4a4a4" stroke="#7c7c7c" stroke-width="0.400"/><rect x="255.500" y="24.600" width="4" height="1.200" fill="#d8d8d8"/><rect x="255.500" y="26.600" width="4" height="1.200" fill="#d0d0d0"/><rect x="255.700" y="29.600" width="1.100" height="1.100" fill="#7ad04a"/><rect x="255.500" y="32" width="4" height="5" fill="#959595"/><path d="M281.800 30.200l5-5.400 5.200 5.400" fill="none" stroke="#3a3a3a" stroke-width="0.9"/><path d="M283 29.600l3.800-4 4 4v6h-7.800z" fill="#fafafa"/><rect x="288.800" y="24.300" width="1" height="1.800" fill="#e08a2a"/><path d="M286.500 34.500c1.500 2 4.500 2.300 5.300 0.300c.3-.9.300-1.600-.200-2.400" fill="none" stroke="#1c1c1c" stroke-width="1.500"/><circle cx="286.700" cy="34.400" r="0.900" fill="#c02a2a"/><circle cx="282.2" cy="35.2" r="3" fill="#8a8a8a" stroke="#5c5c5c" stroke-width="0.9" stroke-dasharray="1.2 0.7"/><circle cx="282.2" cy="35.2" r="2.5" fill="#8e8e8e"/><circle cx="282.2" cy="35.2" r="1.26" fill="#e8e8e8" stroke="#666" stroke-width="0.4"/><rect x="302.300" y="29.200" width="12.400" height="3.200" rx="0.800" fill="#c9c9d2"/><rect x="304.600" y="29.800" width="7.400" height="1.500" fill="#7d5ca6"/><circle cx="312" cy="35.3" r="3.2" fill="#8a8a8a" stroke="#5c5c5c" stroke-width="0.9" stroke-dasharray="1.2 0.7"/><circle cx="312" cy="35.3" r="2.7" fill="#8e8e8e"/><circle cx="312" cy="35.3" r="1.34" fill="#e8e8e8" stroke="#666" stroke-width="0.4"/><circle cx="333.500" cy="28.200" r="4.800" fill="url(#gl)"/><path d="M330.500 26c1.500-1 3-.500 3.500.500s2 1 2.500 2.500" stroke="#dff0ff" stroke-width="0.900" fill="none"/><rect x="335.800" y="30.600" width="6.400" height="5" fill="#2a7ae0" stroke="#1a56b0" stroke-width="0.400"/><rect x="336.600" y="31.300" width="4.800" height="3" fill="#5aa8f8"/><rect x="337.600" y="35.800" width="2.800" height="1" fill="#b8b8b8"/><circle cx="331" cy="35.5" r="3.2" fill="#8a8a8a" stroke="#5c5c5c" stroke-width="0.9" stroke-dasharray="1.2 0.7"/><circle cx="331" cy="35.5" r="2.7" fill="#8e8e8e"/><circle cx="331" cy="35.5" r="1.34" fill="#e8e8e8" stroke="#666" stroke-width="0.4"/><circle cx="362" cy="30.200" r="6.800" fill="url(#gl)"/><path d="M357.500 28.500c2-2.500 4-1.500 5 0s3 1.500 4 4M358.500 33c1.500-1 2.500-.500 3.500.800" stroke="#e4f2ff" stroke-width="1.100" fill="none"/><circle cx="366.3" cy="35.3" r="3.3" fill="#8a8a8a" stroke="#5c5c5c" stroke-width="0.9" stroke-dasharray="1.2 0.7"/><circle cx="366.3" cy="35.3" r="2.8" fill="#8e8e8e"/><circle cx="366.3" cy="35.3" r="1.39" fill="#e8e8e8" stroke="#666" stroke-width="0.4"/><rect x="382.600" y="21.400" width="14.600" height="11.400" fill="#fbfbfb" stroke="#cfcfcf" stroke-width="0.400"/><rect x="382.600" y="21.400" width="14.600" height="1.100" fill="#f0a040"/><path d="M385 24.200h9.800M385 25.800h9.800M389.500 27.400h5.300" stroke="#d4d4d4" stroke-width="0.600"/><path d="M384 33.200l-.600 3.600 2-1 2 1-.600-3.600z" fill="#2a6ad0"/><circle cx="385.400" cy="31.400" r="2.300" fill="#f2c030" stroke="#c8921a" stroke-width="0.400"/><circle cx="385.400" cy="31.400" r="1" fill="#3a7ae0"/><circle cx="393.5" cy="32.4" r="3.5" fill="#8a8a8a" stroke="#5c5c5c" stroke-width="0.9" stroke-dasharray="1.2 0.7"/><circle cx="393.5" cy="32.4" r="3.0" fill="#8e8e8e"/><circle cx="393.5" cy="32.4" r="1.47" fill="#e8e8e8" stroke="#666" stroke-width="0.4"/><path d="M416.400 32.500c-.500-6.500 3-10.500 7.600-10.500s8 4 7.400 10.500c0 1.500-1 2.500-2.500 2.500h-10c-1.500 0-2.500-1-2.500-2.500z" fill="#e9e9e9" stroke="#b9b9b9" stroke-width="0.500"/><path d="M418 24.500c2-2 5-2.700 8-1.500" stroke="#fff" stroke-width="1.200" fill="none"/><path d="M417 29.800c0-1.500 1-2.800 2.300-2.800l2.500 4.500-1.800 3h-1.600c-1 0-1.400-1.500-1.400-4.700z" fill="#2c2c2c"/><path d="M419.500 33.800l4.500-1.300" stroke="#b02a2a" stroke-width="0.800"/><circle cx="428" cy="32.6" r="3.1" fill="#8a8a8a" stroke="#5c5c5c" stroke-width="0.9" stroke-dasharray="1.2 0.7"/><circle cx="428" cy="32.6" r="2.6" fill="#8e8e8e"/><circle cx="428" cy="32.6" r="1.30" fill="#e8e8e8" stroke="#666" stroke-width="0.4"/><rect x="454" y="24.800" width="14.200" height="6.800" rx="0.700" fill="#5a5a5a" stroke="#3c3c3c" stroke-width="0.400"/><rect x="454" y="24.800" width="14.200" height="2" fill="#7c7c7c"/><rect x="455.2" y="28.600" width="1.300" height="1.500" fill="#e0e0e0"/><rect x="457.3" y="28.600" width="1.300" height="1.500" fill="#e0e0e0"/><rect x="459.4" y="28.600" width="1.300" height="1.500" fill="#e0e0e0"/><rect x="461.5" y="28.600" width="1.300" height="1.500" fill="#e0e0e0"/><rect x="463.6" y="28.600" width="1.300" height="1.500" fill="#e0e0e0"/><rect x="465.7" y="28.600" width="1.300" height="1.500" fill="#e0e0e0"/><circle cx="465.6" cy="23.7" r="3" fill="#8a8a8a" stroke="#5c5c5c" stroke-width="0.9" stroke-dasharray="1.2 0.7"/><circle cx="465.6" cy="23.7" r="2.5" fill="#8e8e8e"/><circle cx="465.6" cy="23.7" r="1.26" fill="#e8e8e8" stroke="#666" stroke-width="0.4"/><rect x="491" y="22.600" width="13.600" height="9.800" fill="#c9ccd2" stroke="#6c7480" stroke-width="0.500"/><rect x="491" y="22.600" width="13.600" height="2.200" fill="#27457c"/><rect x="492.200" y="25.800" width="11.200" height="2.400" fill="#5a6f94"/><rect x="492.200" y="29" width="6" height="2.400" fill="#9aa4b4"/><circle cx="501.6" cy="31.5" r="3.6" fill="#3fae3a" stroke="#8fd480" stroke-width="0.5"/><circle cx="501.1" cy="30.7" r="2.7" fill="#5cc455" opacity="0.6"/><path d="M499.20000000000005 30.6h2.2v-1.5l2.9 2.4-2.9 2.4v-1.5h-2.2z" fill="#fff"/><circle cx="531.500" cy="27.600" r="5.800" fill="none" stroke="#4cae3c" stroke-width="2.600" stroke-dasharray="11 2.800"/><path d="M535 20.600l3.400 1-2.600 2.600zM528 34.600l-3.400-1 2.600-2.600z" fill="#3c9a30"/><circle cx="528.600" cy="25.400" r="1.900" fill="#e8b890"/><path d="M525.400 33.600c0-3.400 1.400-5.200 3.200-5.200s3.200 1.800 3.200 5.200z" fill="#b8c4d4" stroke="#7c8898" stroke-width="0.400"/><rect x="527.600" y="29.600" width="2" height="2.600" fill="#f4f4f4"/></svg>
<svg style="left:0;top:0" width="680" height="92">
<defs><radialGradient id="hb" cx="0.4" cy="0.3" r="0.8"><stop offset="0" stop-color="#8ab4e8"/><stop offset="0.6" stop-color="#3b6db8"/><stop offset="1" stop-color="#2a5298"/></radialGradient></defs>
<path d="M434 68.400h6l2.600 2.400v8.200h-8.600z" fill="#f2f5fa" stroke="#b9c9dc" stroke-width="0.400"/><path d="M435.800 72h4M435.800 74h3M435.800 76h2.400" stroke="#b9c9dc" stroke-width="0.500"/>
<path d="M437.200 77.600l4.400-6.600" stroke="#3fae3a" stroke-width="1.500"/><path d="M441.600 71l.800-1.300" stroke="#e0442a" stroke-width="1.500"/><path d="M436.600 78.600l.500-1.400.900.600z" fill="#333"/>
<path d="M587.400 68.600h5.600l2.600 2.600v7.800h-8.200z" fill="#f4f7fb" stroke="#c4d0de" stroke-width="0.400"/><path d="M588.600 71.400h3.600M588.600 73h5.400M588.600 74.600h2M588.600 76.300h5.400" stroke="#c4cede" stroke-width="0.450"/><rect x="588.600" y="72.300" width="3" height="3.400" fill="#a8c0dc"/>
<path d="M591 73.600h2.600v-1.500l3 2.500-3 2.500v-1.500h-2.600z" fill="#2fae3a" stroke="#1f8a2a" stroke-width="0.250"/>
<path d="M622.2 72.6l5.600-4.200 5.600 4.200v6.100h-11.200z" fill="#dcdff4" stroke="#a9aed4" stroke-width="0.400"/><path d="M623.600 70.700h8.400v4.800h-8.400z" fill="#fdf6ee"/><path d="M622.200 72.600l5.600 3.800 5.600-3.800v6.100h-11.200z" fill="#c9cdf0" stroke="#9aa0d0" stroke-width="0.400"/><path d="M622.200 78.700l4.400-3.500M633.400 78.700l-4.400-3.500" stroke="#9aa0d0" stroke-width="0.400"/>
<circle cx="662" cy="74.300" r="5.800" fill="url(#hb)" stroke="#184290" stroke-width="0.400"/><text x="662" y="77.300" font-family="Liberation Sans" font-size="8.400" font-weight="bold" fill="#fff" text-anchor="middle">?</text>
</svg>
</body></html>
